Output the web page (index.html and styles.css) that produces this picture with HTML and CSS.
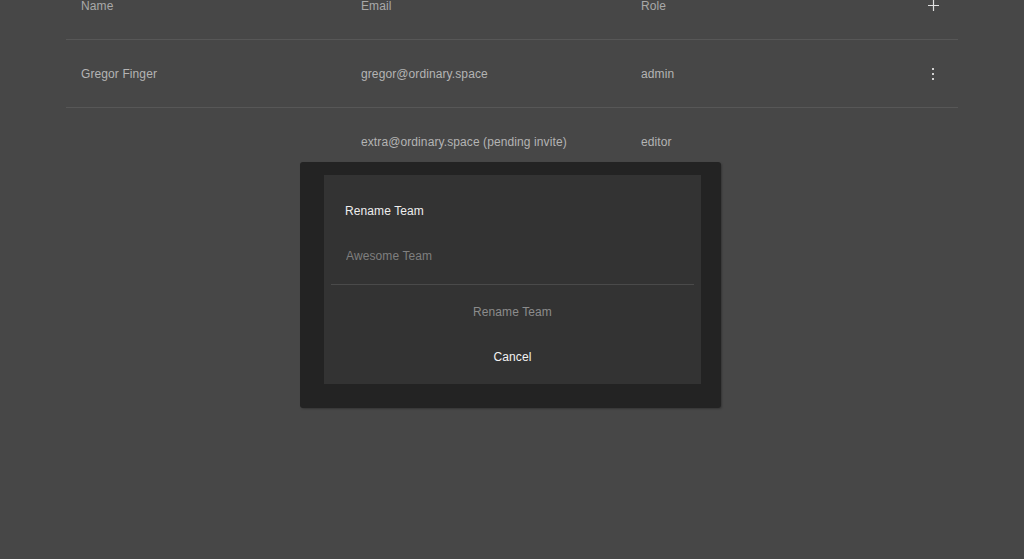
FILE: index.html
```html
<!DOCTYPE html>
<html lang="en">
<head>
    <meta charset="UTF-8">
    <meta name="viewport" content="width=device-width, initial-scale=1.0">
    <title>Team Members</title>
    <link rel="stylesheet" href="styles.css">
</head>
<body>
    <div class="members">
        <div class="row header-row">
            <div class="cell">Name</div>
            <div class="cell">Email</div>
            <div class="cell">Role</div>
            <div class="cell icon-cell">
                <svg width="13" height="13" viewBox="0 0 13 13"><path d="M6.5 1v11M1 6.5h11" stroke="#e0e0e0" stroke-width="1.2"/></svg>
            </div>
        </div>
        <div class="row">
            <div class="cell">Gregor Finger</div>
            <div class="cell">gregor@ordinary.space</div>
            <div class="cell">admin</div>
            <div class="cell icon-cell">
                <svg width="4" height="14" viewBox="0 0 4 14"><rect x="1" y="1" width="2" height="2" fill="#d0d0d0"/><rect x="1" y="6" width="2" height="2" fill="#d0d0d0"/><rect x="1" y="11" width="2" height="2" fill="#d0d0d0"/></svg>
            </div>
        </div>
        <div class="row no-border">
            <div class="cell"></div>
            <div class="cell">extra@ordinary.space (pending invite)</div>
            <div class="cell">editor</div>
            <div class="cell icon-cell"></div>
        </div>
    </div>

    <div class="dialog">
        <div class="dialog-inner">
            <div class="dialog-title">Rename Team</div>
            <div class="dialog-field">
                <input type="text" class="team-input" placeholder="Awesome Team">
            </div>
            <button class="dialog-button disabled">Rename Team</button>
            <button class="dialog-button">Cancel</button>
        </div>
    </div>
</body>
</html>
```

FILE: styles.css
```css
body {
    font-family: "Liberation Sans", Arial, sans-serif;
    font-size: 12px;
    letter-spacing: 0.1px;
    background-color: #474747;
    color: #b4b4b4;
    margin: 0;
    height: 559px;
    overflow: hidden;
}
.members {
    margin: -28px 66px 0 66px;
}
.row {
    display: grid;
    grid-template-columns: 280px 280px 280px 24px;
    align-items: center;
    height: 67px;
    padding-left: 15px;
    border-bottom: 1px solid #575757;
}
.row.no-border {
    border-bottom: none;
}
.header-row {
    color: #a9a9a9;
}
.cell {
    line-height: 16px;
}
.icon-cell {
    display: flex;
    justify-content: center;
    align-items: center;
}
.icon-cell svg {
    display: block;
}
.dialog {
    position: fixed;
    left: 300px;
    top: 162px;
    width: 421px;
    height: 246px;
    box-sizing: border-box;
    padding: 13px 20px 24px 24px;
    background-color: #232323;
    border-radius: 3px;
    box-shadow: 1px 1px 2px rgba(0, 0, 0, 0.25);
}
.dialog-inner {
    height: 209px;
    box-sizing: border-box;
    padding: 28px 7px 5px 7px;
    background-color: #333333;
}
.dialog-title {
    padding-left: 14px;
    line-height: 16px;
    color: #eeeeee;
}
.dialog-field {
    margin-top: 21px;
    padding: 8px 15px 20px 15px;
    border-bottom: 1px solid #4a4a4a;
}
.team-input {
    display: block;
    width: 100%;
    padding: 0;
    border: none;
    outline: none;
    background: transparent;
    font-family: inherit;
    font-size: 12px;
    letter-spacing: 0.1px;
    line-height: 16px;
    height: 16px;
    color: #eeeeee;
}
.team-input::placeholder {
    color: #7f7f7f;
}
.dialog-button {
    display: block;
    width: 100%;
    height: 45px;
    padding: 0;
    border: none;
    background: transparent;
    font-family: inherit;
    font-size: 12px;
    letter-spacing: 0.1px;
    color: #f2f2f2;
    cursor: pointer;
}
.dialog-button.disabled {
    margin-top: 4px;
    color: #8c8c8c;
    cursor: default;
}
```
